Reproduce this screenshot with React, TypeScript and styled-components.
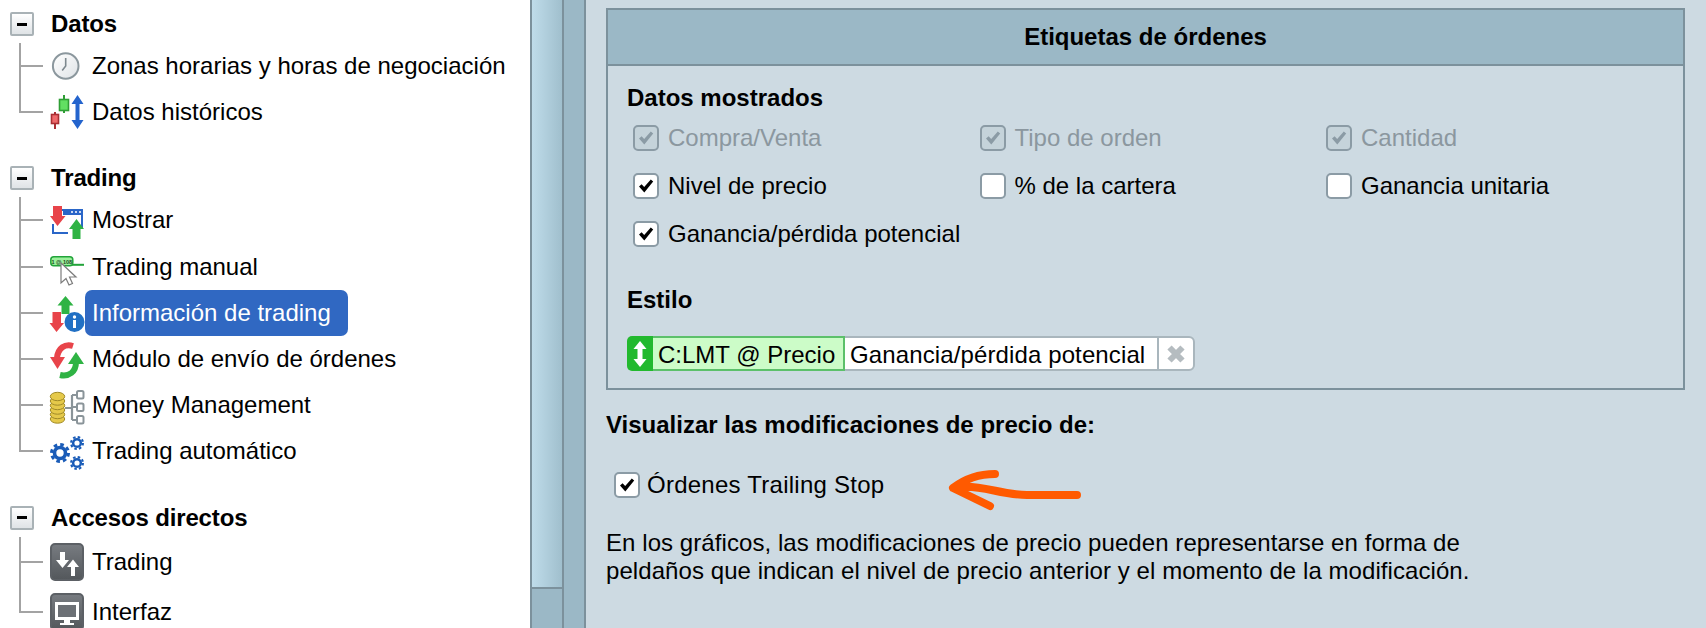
import React from "react";
import styled, {createGlobalStyle} from "styled-components";

const GlobalStyle = createGlobalStyle`
    html, body {
        margin: 0;
        padding: 0;
        height: 100%;
        overflow: hidden;
        background: #cddae2;
    }
    * {
        box-sizing: border-box;
    }
`;

const ClockIcon = () => (
    <IconSvg viewBox="0 0 34 34">
        <defs>
            <linearGradient id="clockFace" x1="0" y1="0" x2="1" y2="1">
                <stop offset="0" stopColor="#fff"/>
                <stop offset="1" stopColor="#dfe3e6"/>
            </linearGradient>
        </defs>
        <circle cx="15.7" cy="17" r="12.8" fill="url(#clockFace)" stroke="#8b979d" strokeWidth="2"/>
        <path d="M15.7 9v8l-3.5 4.5" fill="none" stroke="#7d888e" strokeWidth="1.6"/>
    </IconSvg>
);

const HistoryIcon = () => (
    <IconSvg viewBox="0 0 34 34">
        <path d="M5 17v17" stroke="#a92f33" strokeWidth="2"/>
        <rect x="1.500" y="19.500" width="7" height="9" fill="#ef6a6c" stroke="#a92f33" strokeWidth="1.600"/>
        <path d="M14 0v18" stroke="#2f9e35" strokeWidth="2"/>
        <rect x="9.500" y="4.500" width="9" height="11" fill="#62df62" stroke="#2f9e35" strokeWidth="1.600"/>
        <path d="M27.500 0l6 9h-4v16h4l-6 9-6-9h4V9h-4z" fill="#2464cd"/>
    </IconSvg>
);

const DisplayIcon = () => (
    <IconSvg viewBox="0 0 34 34">
        <path d="M12 7h20v18M3 21v9h15" fill="none" stroke="#2a66c8" strokeWidth="2"/>
        <rect x="13" y="6" width="20" height="6" fill="#2a66c8"/>
        <path d="M21 9h2M25 9h2M29 9h2" stroke="#fff" strokeWidth="1.600"/>
        <path d="M3 3h9v10h3.500l-8 10-7.500-10H3z" fill="#e8444a"/>
        <path d="M26.500 16l7.500 10h-3.500V36h-8V26H19z" fill="#2fb344"/>
    </IconSvg>
);

const ManualIcon = () => (
    <IconSvg viewBox="0 0 34 34">
        <path d="M20 14.800h14" stroke="#22a33a" strokeWidth="2"/>
        <rect x="0.800" y="6.800" width="22" height="9" rx="3" fill="#9bf09b" stroke="#22a33a" strokeWidth="1.500"/>
        <TinyText x="11.800" y="13.500">1 @ 108</TinyText>
        <path d="M11 13v20l5-4.500 3 6.500 3.500-1.500-3-6.500h6.500z" fill="#fff" stroke="#7c7c7c" strokeWidth="1.200"/>
    </IconSvg>
);

const InfoIcon = () => (
    <IconSvg viewBox="0 0 34 34">
        <path d="M15.500 0l8 9.500h-4V18h-8V9.500h-4z" fill="#2fb344"/>
        <path d="M2.500 16h8.500v11h3l-7.500 9L-.5 27h3z" fill="#e8444a"/>
        <circle cx="24.500" cy="26" r="10" fill="#2170c4"/>
        <circle cx="24.500" cy="21" r="1.700" fill="#fff"/>
        <rect x="23" y="24" width="3" height="8" fill="#fff"/>
    </IconSvg>
);

const OrderIcon = () => (
    <IconSvg viewBox="0 0 34 34">
        <path d="M23 4c-8-2.500-15 2-16 12" fill="none" stroke="#e8444a" strokeWidth="6"/>
        <path d="M0 15h15l-7.500 12z" fill="#e8444a"/>
        <path d="M10 33c9 2 16-3 16-13" fill="none" stroke="#2fb344" strokeWidth="6"/>
        <path d="M18 22h16l-8-12z" fill="#2fb344"/>
    </IconSvg>
);

const MoneyIcon = () => (
    <IconSvg viewBox="0 0 34 34">
        <path d="M15 20h7M22 7v25M22 7h6M22 19h6M22 32h6" fill="none" stroke="#8a9499" strokeWidth="2.200"/>
        <rect x="27" y="3" width="6.500" height="7.500" rx="1.500" fill="#fff" stroke="#8a9499" strokeWidth="2"/>
        <rect x="27" y="15.500" width="6.500" height="7.500" rx="1.500" fill="#fff" stroke="#8a9499" strokeWidth="2"/>
        <rect x="27" y="28" width="6.500" height="7.500" rx="1.500" fill="#fff" stroke="#8a9499" strokeWidth="2"/>
        {[31, 26.500, 22, 17.500, 13, 8.500].map((y) => (
            <ellipse key={y} cx="7.500" cy={y} rx="7.200" ry="4.200" fill="#e5c94a" stroke="#a08a28" strokeWidth="1"/>
        ))}
    </IconSvg>
);

const Gear = ({cx, cy, r}: {cx: number; cy: number; r: number}) => (
    <g>
        <circle cx={cx} cy={cy} r={r * 0.85} fill="none" stroke="#1a5cb8" strokeWidth={r * 0.3} strokeDasharray={`${r * 0.36} ${r * 0.307}`}/>
        <circle cx={cx} cy={cy} r={r * 0.55} fill="#fff" stroke="#1a5cb8" strokeWidth={r * 0.36}/>
    </g>
);

const AutoIcon = () => (
    <IconSvg viewBox="0 0 34 34">
        <Gear cx={10} cy={19} r={10}/>
        <Gear cx={27} cy={9} r={7}/>
        <Gear cx={27} cy={29} r={7}/>
    </IconSvg>
);

const ShortcutTradingIcon = () => (
    <ShortcutIcon>
        <IconSvg viewBox="0 0 34 34">
            <path d="M10 5h5v8h4l-6.500 8L6 13h4z" fill="#fff"/>
            <path d="M21 29v-9h-4l6-7.500 6 7.500h-4v9z" fill="#fff"/>
        </IconSvg>
    </ShortcutIcon>
);

const ShortcutDisplayIcon = () => (
    <ShortcutIcon>
        <IconSvg viewBox="0 0 34 34">
            <rect x="6.500" y="6.500" width="21" height="15" fill="#6c7075" stroke="#fff" strokeWidth="3"/>
            <path d="M14 23h6v3h-6zM10 26h14v2H10z" fill="#fff"/>
        </IconSvg>
    </ShortcutIcon>
);

type TreeItem = {
    icon: React.ReactNode;
    label: string;
    selected?: boolean;
};

type TreeSection = {
    title: string;
    rowHeight: number;
    items: TreeItem[];
};

const sections: TreeSection[] = [
    {
        title: "Datos",
        rowHeight: 46.2,
        items: [
            {icon: <ClockIcon/>, label: "Zonas horarias y horas de negociación"},
            {icon: <HistoryIcon/>, label: "Datos históricos"},
        ],
    },
    {
        title: "Trading",
        rowHeight: 46.2,
        items: [
            {icon: <DisplayIcon/>, label: "Mostrar"},
            {icon: <ManualIcon/>, label: "Trading manual"},
            {icon: <InfoIcon/>, label: "Información de trading", selected: true},
            {icon: <OrderIcon/>, label: "Módulo de envío de órdenes"},
            {icon: <MoneyIcon/>, label: "Money Management"},
            {icon: <AutoIcon/>, label: "Trading automático"},
        ],
    },
    {
        title: "Accesos directos",
        rowHeight: 50,
        items: [
            {icon: <ShortcutTradingIcon/>, label: "Trading"},
            {icon: <ShortcutDisplayIcon/>, label: "Interfaz"},
        ],
    },
];

const Check = ({checked, disabled}: {checked?: boolean; disabled?: boolean}) => (
    <CheckBox $disabled={disabled}>
        {checked && (
            <svg width="18" height="16" viewBox="0 0 18 16">
                <path d="M2 8.500l2.600-2.300 2.600 2.800L13.800 1.500 16.200 3.500 7.300 14.500z" fill={disabled ? "#8b9ba5" : "#000"}/>
            </svg>
        )}
    </CheckBox>
);

const options = [
    {label: "Compra/Venta", checked: true, disabled: true},
    {label: "Tipo de orden", checked: true, disabled: true},
    {label: "Cantidad", checked: true, disabled: true},
    {label: "Nivel de precio", checked: true},
    {label: "% de la cartera"},
    {label: "Ganancia unitaria"},
    {label: "Ganancia/pérdida potencial", checked: true},
];

export default function App() {
    return (
        <Page>
            <GlobalStyle/>
            <Sidebar>
                {sections.map((section) => (
                    <section key={section.title}>
                        <SectionHead>
                            <Toggle/>
                            <SectionTitle>{section.title}</SectionTitle>
                        </SectionHead>
                        <Rows>
                            {section.items.map((item, i) => (
                                <Row key={item.label} $height={section.rowHeight}>
                                    <Branch $last={i === section.items.length - 1}/>
                                    <IconSlot>{item.icon}</IconSlot>
                                    <RowLabel $selected={item.selected}>{item.label}</RowLabel>
                                </Row>
                            ))}
                        </Rows>
                    </section>
                ))}
            </Sidebar>
            <Splitter>
                <SplitterThumb/>
                <SplitterRest/>
            </Splitter>
            <ScrollColumn/>
            <Content>
                <Panel>
                    <PanelHeader>Etiquetas de órdenes</PanelHeader>
                    <PanelBody>
                        <BoldLine>Datos mostrados</BoldLine>
                        <OptionGrid>
                            {options.map((o) => (
                                <Option key={o.label}>
                                    <Check checked={o.checked} disabled={o.disabled}/>
                                    <OptionLabel $disabled={o.disabled}>{o.label}</OptionLabel>
                                </Option>
                            ))}
                        </OptionGrid>
                        <StyleTitle>Estilo</StyleTitle>
                        <StyleBar>
                            <DragHandle>
                                <svg width="14" height="26" viewBox="0 0 14 26">
                                    <path d="M7 0l6.500 8H9.500v10h4L7 26 .5 18h4V8h-4z" fill="#fff"/>
                                </svg>
                            </DragHandle>
                            <PriceChip>C:LMT @ Precio</PriceChip>
                            <GainChip>Ganancia/pérdida potencial</GainChip>
                            <RemoveButton>
                                <svg width="20" height="20" viewBox="0 0 20 20">
                                    <path d="M3.500 3.500l13 13M16.500 3.500l-13 13" stroke="#b5bcc0" strokeWidth="6"/>
                                </svg>
                            </RemoveButton>
                        </StyleBar>
                    </PanelBody>
                </Panel>
                <BelowTitle>Visualizar las modificaciones de precio de:</BelowTitle>
                <TrailingRow>
                    <Check checked/>
                    <TrailingLabel>Órdenes Trailing Stop</TrailingLabel>
                    <ArrowMark viewBox="0 0 134 44" width="134" height="44">
                        <path d="M65 14C50 14 36 18 23 28L60 46M32 27c20-2 40 8 65 8h50" fill="none" stroke="#ff5a00" strokeWidth="8" strokeLinecap="round" strokeLinejoin="round" transform="translate(-21 -8)"/>
                    </ArrowMark>
                </TrailingRow>
                <Note>
                    En los gráficos, las modificaciones de precio pueden representarse en forma de<br/>
                    peldaños que indican el nivel de precio anterior y el momento de la modificación.
                </Note>
            </Content>
        </Page>
    );
}

const Page = styled.div`
    display: flex;
    width: 1706px;
    height: 628px;
    overflow: hidden;
    font-family: "Liberation Sans", Arial, sans-serif;
    color: #000;
`;
const Sidebar = styled.aside`
    flex: none;
    display: flex;
    flex-direction: column;
    gap: 25px;
    width: 530px;
    padding: 6px 0 0 10px;
    background: #fff;
`;
const SectionHead = styled.div`
    display: flex;
    align-items: center;
    gap: 17px;
    height: 36px;
`;
const Toggle = styled.span`
    display: flex;
    align-items: center;
    justify-content: center;
    width: 24px;
    height: 24px;
    border: 2px solid #a9b2b6;
    border-radius: 2px;
    background: linear-gradient(#fff, #dfe3e6);

    &::before {
        content: "";
        width: 10px;
        height: 3px;
        background: #000;
    }
`;
const SectionTitle = styled.h3`
    margin: 0;
    font-size: 24px;
    letter-spacing: -0.15px;
    font-weight: 700;
`;
const Rows = styled.div`
    margin: 1px 0 0 9px;
`;
const Row = styled.div<{$height: number}>`
    display: flex;
    align-items: center;
    height: ${(p) => p.$height}px;
`;
const Branch = styled.span<{$last: boolean}>`
    flex: none;
    align-self: stretch;
    width: 24px;
    background:
        linear-gradient(#a3a3a3, #a3a3a3) left top / 2px ${(p) => (p.$last ? "50%" : "100%")} no-repeat,
        linear-gradient(#a3a3a3, #a3a3a3) left center / 100% 2px no-repeat;
`;
const IconSlot = styled.span`
    flex: none;
    width: 34px;
    height: 34px;
    margin-left: 7px;
`;
const IconSvg = styled.svg`
    display: block;
    width: 34px;
    height: 34px;
    overflow: visible;
`;
const TinyText = styled.text`
    font-family: "Liberation Sans", Arial, sans-serif;
    font-size: 5.500px;
    font-weight: 700;
    text-anchor: middle;
    fill: #1d4a25;
`;
const ShortcutIcon = styled.span`
    display: block;
    width: 34px;
    height: 38px;
    margin-top: -2px;
    padding-top: 2px;
    border-radius: 5px;
    border: 2px solid #5c6065;
    background: linear-gradient(#777b80, #54585c);

    svg {
        margin: 0 -2px;
    }
`;
const RowLabel = styled.span<{$selected?: boolean}>`
    align-self: stretch;
    display: flex;
    align-items: center;
    margin-left: 1px;
    padding: 0 17px 0 7px;
    font-size: 24px;
    border-radius: 7px;
    background: ${(p) => (p.$selected ? "#3068c2" : "transparent")};
    color: ${(p) => (p.$selected ? "#fff" : "#000")};
`;
const Splitter = styled.div`
    flex: none;
    display: flex;
    flex-direction: column;
    width: 34px;
    border-left: 2px solid #7c919c;
    border-right: 2px solid #7c919c;
`;
const SplitterThumb = styled.div`
    height: 589px;
    background: linear-gradient(90deg, #bfdcea, #a0bfcd);
    border-bottom: 2px solid #7c919c;
`;
const SplitterRest = styled.div`
    flex: 1;
    background: #9bb8c6;
`;
const ScrollColumn = styled.div`
    flex: none;
    width: 22px;
    background: #9bb8c6;
    border-right: 2px solid #7c919c;
`;
const Content = styled.main`
    flex: 1;
    padding: 8px 21px 0 20px;
    background: #cddae2;
`;
const Panel = styled.div`
    height: 382px;
    border: 2px solid #7c919c;
`;
const PanelHeader = styled.h2`
    display: flex;
    align-items: center;
    justify-content: center;
    height: 56px;
    margin: 0;
    padding-bottom: 1px;
    font-size: 24px;
    font-weight: 700;
    background: #9bb8c6;
    border-bottom: 2px solid #7c919c;
`;
const PanelBody = styled.div`
    padding: 18px 0 0 19px;
`;
const BoldLine = styled.h4`
    margin: 0;
    font-size: 24px;
    line-height: 28px;
    font-weight: 700;
`;
const OptionGrid = styled.div`
    display: grid;
    grid-template-columns: repeat(3, 346.5px);
    grid-auto-rows: 48px;
    margin: 2px 0 0 6px;
`;
const Option = styled.label`
    display: flex;
    align-items: center;
    gap: 9px;
    white-space: nowrap;
`;
const CheckBox = styled.span<{$disabled?: boolean}>`
    flex: none;
    display: flex;
    align-items: center;
    justify-content: center;
    width: 26px;
    height: 26px;
    border: 2px solid #8b9ba5;
    border-radius: 5px;
    background: ${(p) => (p.$disabled ? "#c5d3da" : "#fff")};
`;
const OptionLabel = styled.span<{$disabled?: boolean}>`
    font-size: 24px;
    line-height: 28px;
    color: ${(p) => (p.$disabled ? "#8b979f" : "#000")};
`;
const TrailingLabel = styled(OptionLabel)`
    letter-spacing: 0.25px;
`;
const StyleTitle = styled(BoldLine)`
    margin-top: 28px;
`;
const StyleBar = styled.div`
    display: flex;
    align-items: stretch;
    width: 568px;
    height: 35px;
    margin-top: 22px;
    font-size: 24px;
    line-height: 34px;
    white-space: nowrap;
`;
const DragHandle = styled.span`
    flex: none;
    display: flex;
    align-items: center;
    justify-content: center;
    width: 26px;
    background: #22b92e;
    border-radius: 5px 0 0 5px;
`;
const PriceChip = styled.span`
    flex: none;
    width: 192px;
    padding-left: 5px;
    background: #ccfcc8;
    border: 2px solid #5cc06a;
    border-left: none;
`;
const GainChip = styled.span`
    flex: none;
    width: 312px;
    padding-left: 5px;
    letter-spacing: 0.12px;
    background: #fff;
    border-top: 2px solid #a9b6bd;
    border-bottom: 2px solid #a9b6bd;
`;
const RemoveButton = styled.span`
    flex: 1;
    display: flex;
    align-items: center;
    justify-content: center;
    background: #fff;
    border: 2px solid #a9b6bd;
    border-radius: 0 6px 6px 0;
`;
const BelowTitle = styled.h4`
    margin: 21px 0 0;
    font-size: 24px;
    line-height: 28px;
    font-weight: 700;
`;
const TrailingRow = styled.div`
    display: flex;
    align-items: center;
    gap: 7px;
    height: 28px;
    margin: 32px 0 0 8px;
`;
const ArrowMark = styled.svg`
    flex: none;
    margin: 10px 0 0 60px;
    overflow: visible;
`;
const Note = styled.p`
    margin: 30px 0 0;
    font-size: 24px;
    letter-spacing: 0.07px;
    line-height: 27.500px;
    white-space: nowrap;
`;
